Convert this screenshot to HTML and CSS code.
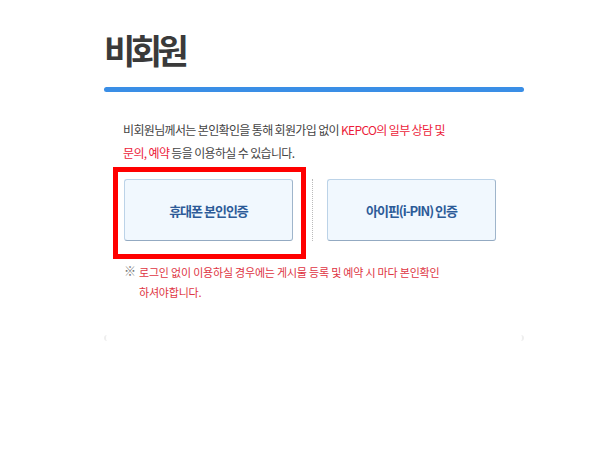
FILE: index.html
```html
<!DOCTYPE html>
<html>
<head lang="ko">
    <meta charset="UTF-8">
    <title>비회원</title>
    <link rel="stylesheet" href="styles.css">
</head>
<body>
<div class="wrap">
    <h1 class="title">비회원</h1>
    <div class="title-bar"></div>
    <p class="intro">
        비회원님께서는 본인확인을 통해 회원가입 없이 <em class="hl">KEPCO의 일부 상담 및<br>문의, 예약</em> 등을 이용하실 수 있습니다.
    </p>
    <div class="cert-row">
        <div class="cert-col cert-col-mark">
            <a href="#" class="cert-btn">휴대폰 본인인증</a>
        </div>
        <div class="cert-col cert-col-sep">
            <a href="#" class="cert-btn">아이핀(i-PIN) 인증</a>
        </div>
    </div>
    <p class="notice">
        <span class="notice-mark">※</span>
        <span class="notice-text">로그인 없이 이용하실 경우에는 게시물 등록 및 예약 시 마다 본인확인<br>하셔야합니다.</span>
    </p>
    <div class="foot-line"></div>
</div>
</body>
</html>
```

FILE: styles.css
```css
*{
    margin: 0;
    padding: 0;
}
body {
    background: #fff;
    font-family: "Noto Sans CJK KR", "Noto Sans", sans-serif;
    color: #444;
}
.wrap {
    width: 420px;
    padding: 27px 0 40px 104px;
}
.title {
    font-size: 34px;
    font-weight: bold;
    line-height: 46px;
    letter-spacing: -4.5px;
    color: #3a3a3a;
}
.title-bar {
    height: 5px;
    margin-top: 14px;
    border-radius: 3px;
    background: #3a8ee6;
}
.intro {
    margin: 26px 0 0 19px;
    font-size: 12px;
    line-height: 23px;
    letter-spacing: -0.65px;
}
.hl {
    font-style: normal;
    color: #ec1c3a;
}
.cert-row {
    display: flex;
    align-items: flex-start;
    margin: 3px 0 0 9px;
}
.cert-col-mark {
    border: 5px solid #ff0000;
    padding: 7px 8px 13px 6px;
}
.cert-col-sep {
    margin: 12px 0 0 6px;
    padding-left: 14px;
    border-left: 1px dotted #bbb;
}
.cert-btn {
    display: flex;
    align-items: center;
    justify-content: center;
    width: 167px;
    height: 60px;
    border: 1px solid #bcd3e8;
    border-right-color: #9fb5cb;
    border-bottom-color: #93aac2;
    border-radius: 3px;
    background: #f1f8fe;
    color: #2c5b98;
    font-size: 13px;
    font-weight: bold;
    letter-spacing: -1px;
    text-decoration: none;
}
.notice {
    display: flex;
    margin: 3px 0 0 20px;
    font-size: 11px;
    line-height: 20px;
    letter-spacing: -0.2px;
}
.notice-mark {
    flex: none;
    width: 15px;
    font-size: 12px;
    line-height: 18px;
    letter-spacing: 0;
    color: #777;
}
.notice-text {
    color: #de3543;
}
.foot-line {
    height: 6px;
    margin-top: 33px;
    border-left: 2px solid #eee;
    border-right: 2px solid #eee;
    border-radius: 3px;
}
```
